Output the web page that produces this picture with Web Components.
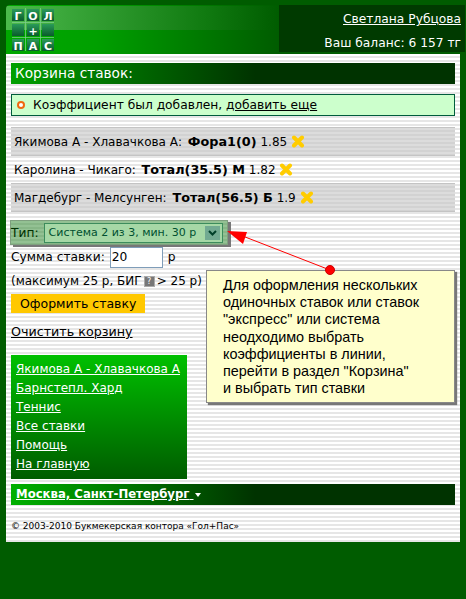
<!DOCTYPE html>
<html>
<head>
<meta charset="utf-8">
<style>
html, body { margin: 0; padding: 0; background: #005c00; }
body { width: 466px; height: 599px; overflow: hidden; font: 12.25px "DejaVu Sans", sans-serif; color: #000; }
</style>
</head>
<body>
<gp-page>
  <gp-header slot="header" user="Светлана Рубцова" balance="Ваш баланс: 6 157 тг"></gp-header>
  <gp-bar>Корзина ставок:</gp-bar>
  <gp-notice>Коэффициент был добавлен, <a href="#">добавить еще</a></gp-notice>
  <gp-bet shaded event="Якимова А - Хлавачкова А:" pick="Фора1(0)" odds="1.85"></gp-bet>
  <gp-bet event="Каролина - Чикаго:" pick="Тотал(35.5) М" odds="1.82"></gp-bet>
  <gp-bet shaded event="Магдебург - Мелсунген:" pick="Тотал(56.5) Б" odds="1.9"></gp-bet>
  <gp-form></gp-form>
  <gp-menu>
    <a href="#">Якимова А - Хлавачкова А</a>
    <a href="#">Барнстепл. Хард</a>
    <a href="#">Теннис</a>
    <a href="#">Все ставки</a>
    <a href="#">Помощь</a>
    <a href="#">На главную</a>
  </gp-menu>
  <gp-city>Москва, Санкт-Петербург</gp-city>
  <gp-footer>© 2003-2010 Букмекерская контора «Гол+Пас»</gp-footer>
  <gp-callout></gp-callout>
</gp-page>
<script>
// page frame: header on top, striped panel under it
class GpPage extends HTMLElement {
  constructor() {
    super();
    this.attachShadow({ mode: 'open' }).innerHTML = `
    <style>
      :host { display: block; position: relative; width: 466px; }
      .panel {
        margin-left: 6px;
        width: 454px;
        height: 488px;
        padding: 9px 5px 0;
        box-sizing: border-box;
        background: repeating-linear-gradient(#fff 0 2px, #e6e6e6 2px 4px);
      }
    </style>
    <slot name="header"></slot>
    <div class="panel"><slot></slot></div>`;
  }
}
customElements.define('gp-page', GpPage);

class GpHeader extends HTMLElement {
  connectedCallback() {
    const cell = (t, x, y) => `<g transform="translate(${x} ${y})"><rect x="-1.5" y="-1.5" width="15" height="15" fill="none" stroke="#7fcf8f" stroke-width="1" stroke-dasharray="1 1"/><rect width="12" height="12" fill="url(#c)"/><text x="6" y="10.5" text-anchor="middle" font-family="DejaVu Sans" font-weight="700" font-size="11" fill="#fff">${t}</text></g>`;
    this.attachShadow({ mode: 'open' }).innerHTML = `
    <style>
      :host { display: block; height: 54px; padding-top: 5px; box-sizing: border-box; background: #005c00; }
      .bar {
        display: flex; height: 49px; margin-left: 6px; position: relative;
        border-top-left-radius: 4px;
        background:
          linear-gradient(90deg, #4cba4c, #107a10 200px, #005c00 273px) 0 1px / 100% 24px no-repeat,
          linear-gradient(90deg, #00a800 0, #00a000 90px, #005c00 273px);
      }
      svg { margin: 3px 0 0 6px; flex: none; }
      .who {
        margin-left: auto; margin-right: 1px; width: 186px; height: 47px; box-sizing: border-box;
        padding: 2px 4px 0 0; text-align: right; color: #fff; background: #003a00;
        line-height: 24px;
      }
      a { color: #fff; }
    </style>
    <div class="bar">
      <svg width="42" height="43" viewBox="0 -1 42 43">
        <defs><linearGradient id="c" x1="0" y1="0" x2="0" y2="1"><stop offset="0" stop-color="#2a9a5a"/><stop offset="1" stop-color="#0a5c2c"/></linearGradient></defs>
        ${cell('Г', 0, 0)}${cell('О', 15, 0)}${cell('Л', 30, 0)}
        ${cell('', 0, 15)}${cell('+', 15, 15)}${cell('', 30, 15)}
        ${cell('П', 0, 30)}${cell('А', 15, 30)}${cell('С', 30, 30)}
      </svg>
      <div class="who"><a href="#">${this.getAttribute('user')}</a><br>${this.getAttribute('balance')}</div>
    </div>`;
  }
}
customElements.define('gp-header', GpHeader);

class GpBar extends HTMLElement {
  constructor() {
    super();
    this.attachShadow({ mode: 'open' }).innerHTML = `
    <style>
      :host {
        display: block; height: 21px; line-height: 21px; padding-left: 4px;
        margin-bottom: 10px; color: #fff; font-weight: 400; font-size: 13.7px;
        background: linear-gradient(90deg, #00a000, #003300 55%);
      }
    </style><slot></slot>`;
  }
}
customElements.define('gp-bar', GpBar);

class GpNotice extends HTMLElement {
  constructor() {
    super();
    this.attachShadow({ mode: 'open' }).innerHTML = `
    <style>
      :host {
        display: flex; align-items: center; height: 22px; box-sizing: border-box;
        border: 1px solid #005c3c; background: #ccffcc; padding-left: 5px;
        margin-bottom: 11px;
      }
      i { width: 4px; height: 4px; border: 2.5px solid #f06a10; border-radius: 50%; margin-right: 8px; background: #fff; }
      ::slotted(a) { color: #000; }
    </style><i></i><span><slot></slot></span>`;
  }
}
customElements.define('gp-notice', GpNotice);

class GpBet extends HTMLElement {
  connectedCallback() {
    this.attachShadow({ mode: 'open' }).innerHTML = `
    <style>
      :host { display: block; height: 27px; line-height: 27px; padding-left: 3px; box-sizing: border-box; white-space: nowrap; font-size: 12px; }
      :host([shaded]) { height: 29px; background: repeating-linear-gradient(#dcdcdc 0 2px, #d2d2d2 2px 4px); border-top: 1px solid #c4c4c4; border-bottom: 1px solid #c4c4c4; }
      b { font-weight: 700; font-size: 12.8px; margin-left: 2px; }
      svg { vertical-align: -2px; }
    </style>
    ${this.getAttribute('event')} <b>${this.getAttribute('pick')}</b> ${this.getAttribute('odds')}
    <svg width="14" height="13" viewBox="0 0 14 13"><path d="M3 2.5 L11 10.5 M11 2.5 L3 10.5" stroke="#ffcc00" stroke-width="4" stroke-linecap="round" fill="none"/></svg>`;
  }
}
customElements.define('gp-bet', GpBet);

class GpForm extends HTMLElement {
  constructor() {
    super();
    this.attachShadow({ mode: 'open' }).innerHTML = `
    <style>
      :host { display: block; padding-top: 8px; }
      .type {
        display: flex; align-items: center; width: 218px; height: 25px; box-sizing: border-box;
        margin-left: -1px; padding-left: 0; color: #003000;
        background: repeating-linear-gradient(#93c193 0 2px, #86b686 2px 4px);
        border: 1px solid #7f9f7f; box-shadow: 3px 2px 0 #777;
      }
      .sel {
        display: flex; align-items: center; justify-content: space-between;
        width: 179px; height: 20px; box-sizing: border-box; margin-left: 5px; white-space: nowrap;
        border: 1px solid #3c8c5c; background: #a6d8a6; color: #005030; padding: 0 2px 0 4px; font-size: 11px;
      }
      .sel i { width: 15px; height: 14px; background: #72aa92; display: flex; align-items: center; justify-content: center; }
      .row { display: flex; align-items: center; height: 24px; }
      input { width: 53px; height: 21px; box-sizing: border-box; border: 1px solid #7f9db9; font: 12.25px "DejaVu Sans", sans-serif; margin: 0 5px; padding: 0 1px; }
      .max { font-size: 12px; }
      .q { width: 9px; height: 9px; margin: 0 2px; background: #777; color: #fff; font-size: 8px; line-height: 9px; text-align: center; border: 1px solid #aaa; }
      .btn { width: 134px; height: 19px; line-height: 19px; box-sizing: border-box; padding-left: 9px; background: #ffc800; margin-top: 1px; font-size: 12.5px; }
      a { display: inline-block; color: #000; margin-top: 11px; font-size: 12.7px; }
    </style>
    <div class="type">Тип: <div class="sel">Система 2 из 3, мин. 30 р<i><svg width="9" height="6" viewBox="0 0 9 6"><path d="M1 1 L4.5 4.5 L8 1" stroke="#00402a" stroke-width="2" fill="none"/></svg></i></div></div>
    <div class="row">Сумма ставки:<input value="20">р</div>
    <div class="row max">(максимум 25 р, БИГ<span class="q">?</span>&gt;&nbsp;25 р)</div>
    <div class="btn">Оформить ставку</div>
    <a href="#">Очистить корзину</a>`;
  }
}
customElements.define('gp-form', GpForm);

class GpMenu extends HTMLElement {
  constructor() {
    super();
    this.attachShadow({ mode: 'open' }).innerHTML = `
    <style>
      :host {
        display: flex; flex-direction: column; align-items: flex-start;
        width: 176px; height: 124px; box-sizing: border-box; margin-top: 16px; padding: 5px 0 0 5px;
        background: linear-gradient(#00c000, #005c00); font-size: 12px;
      }
      ::slotted(a) { color: #fff; line-height: 19px; }
    </style><slot></slot>`;
  }
}
customElements.define('gp-menu', GpMenu);

class GpCity extends HTMLElement {
  constructor() {
    super();
    this.attachShadow({ mode: 'open' }).innerHTML = `
    <style>
      :host {
        display: block; height: 21px; line-height: 21px; margin-top: 5px; padding-left: 5px;
        color: #fff; font-weight: 700; font-size: 11.7px;
        background: linear-gradient(90deg, #00b000, #003300 55%);
      }
      span { text-decoration: underline; }
      i { display: inline-block; border: 3px solid transparent; border-top: 4px solid #fff; border-bottom: 0; vertical-align: 1px; margin-left: 1px; }
    </style><span><slot></slot> <i></i></span>`;
  }
}
customElements.define('gp-city', GpCity);

class GpFooter extends HTMLElement {
  constructor() {
    super();
    this.attachShadow({ mode: 'open' }).innerHTML = `
    <style>:host { display: block; margin-top: 15px; font-size: 9px; line-height: 12px; }</style><slot></slot>`;
  }
}
customElements.define('gp-footer', GpFooter);

// the yellow note with its red arrow lies over the page
class GpCallout extends HTMLElement {
  constructor() {
    super();
    this.attachShadow({ mode: 'open' }).innerHTML = `
    <style>
      :host { display: block; }
      svg { position: absolute; left: 0; top: 0; pointer-events: none; }
      .note {
        position: absolute; left: 206px; top: 270px; width: 249px; height: 133px; box-sizing: border-box;
        padding: 6px 0 0 16px; background: #ffffcc; border: 1px solid #888; box-shadow: 2px 2px 1px #777;
        font: 14.4px/17.2px "Liberation Sans", sans-serif; white-space: nowrap;
      }
    </style>
    <svg width="466" height="599">
      <line x1="330" y1="270" x2="240" y2="235" stroke="#f00"/>
      <polygon points="227,231 247,232 243,244" fill="#f00"/>
    </svg>
    <div class="note">Для оформления нескольких<br>одиночных ставок или ставок<br>"экспресс" или система<br>неодходимо выбрать<br>коэффициенты в линии,<br>перейти в раздел "Корзина"<br>и выбрать тип ставки</div>
    <svg width="466" height="599"><circle cx="330" cy="270" r="4.5" fill="#f00" stroke="#c00"/></svg>`;
  }
}
customElements.define('gp-callout', GpCallout);
</script>
</body>
</html>
